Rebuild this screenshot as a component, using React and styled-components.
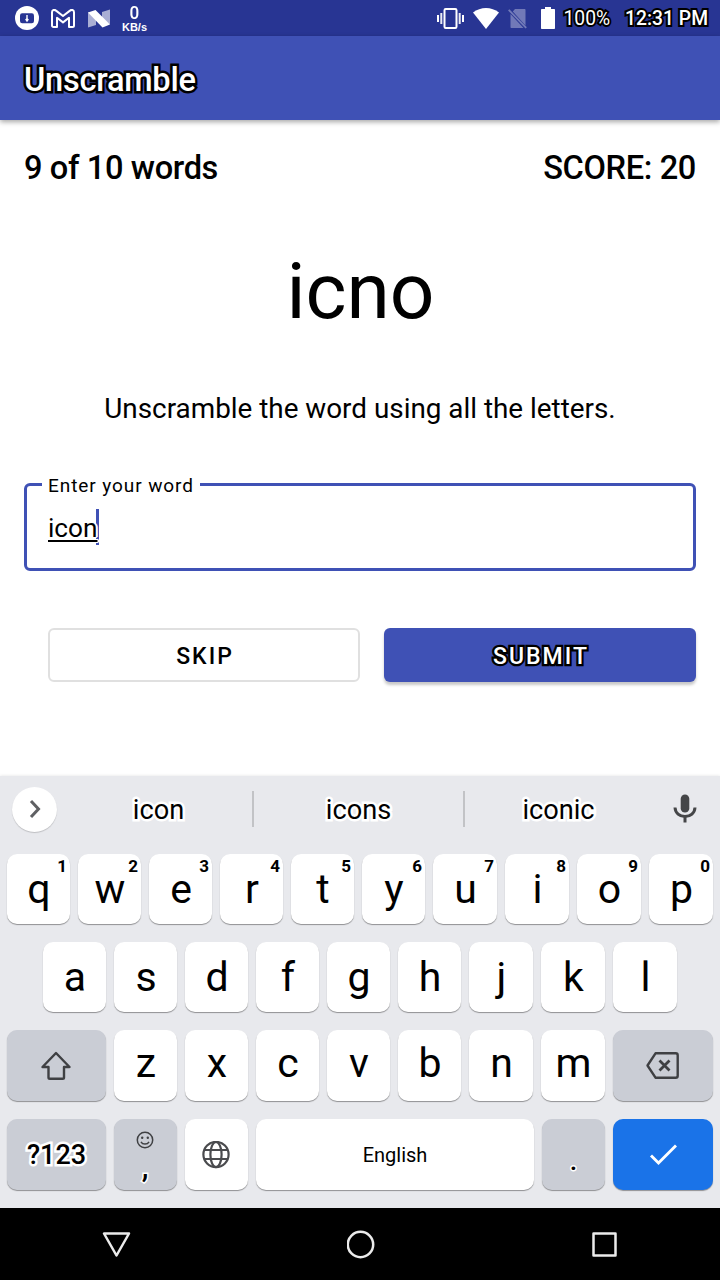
import React from "react";
import styled, { createGlobalStyle, css } from "styled-components";

const Global = createGlobalStyle`
  * { box-sizing: border-box; }
  body { margin: 0; background: #fff; font-family: Roboto, sans-serif; color: #000; }
  button { font-family: inherit; color: inherit; border: 0; padding: 0; background: none; }
  svg { display: block; flex: none; }
`;

const outlined = (color, width) => css`
  -webkit-text-stroke: ${width}px ${color};
  paint-order: stroke fill;
  stroke-linejoin: round;
`;

const Screen = styled.div`
  width: 720px;
  height: 1280px;
  display: flex;
  flex-direction: column;
  overflow: hidden;
  background: #fff;
`;

const StatusBar = styled.header`
  height: 36px;
  flex: none;
  display: flex;
  align-items: center;
  justify-content: space-between;
  padding: 0 12px 0 15px;
  background: #283593;
  color: #fff;
`;

const StatusGroup = styled.div`
  display: flex;
  align-items: center;
  gap: ${(p) => p.$gap}px;
  margin-left: ${(p) => p.$left || 0}px;
`;

const NetSpeed = styled.div`
  display: flex;
  flex-direction: column;
  align-items: center;
  width: 27px;
  margin-left: -1px;
  font-family: "Liberation Sans", sans-serif;
  font-weight: 700;
`;

const NetValue = styled.span`
  font-family: Roboto, sans-serif;
  font-size: 19px;
  line-height: 18px;
  font-weight: 500;
  transform: scaleX(0.9);
`;

const NetUnit = styled.span`
  font-size: 11px;
  line-height: 10px;
`;

const StatusText = styled.span`
  font-size: 19.3px;
  line-height: 36px;
  padding-top: 1px;
  font-weight: ${(p) => p.$weight};
  margin-left: ${(p) => p.$left}px;
  white-space: nowrap;
  ${outlined("#000", 4)}
`;

const AppBar = styled.div`
  height: 84px;
  flex: none;
  display: flex;
  align-items: center;
  padding: 4px 24px 0;
  background: #3f51b5;
  box-shadow: 0 2px 5px rgba(0, 0, 0, 0.35);
`;

const Title = styled.h1`
  margin: 0;
  color: #fff;
  font-size: 32.6px;
  letter-spacing: -0.25px;
  font-weight: 500;
  ${outlined("#000", 5)}
`;

const Game = styled.main`
  flex: 1;
  min-height: 0;
  display: flex;
  flex-direction: column;
  padding: 25px 24px 0;
`;

const Stats = styled.div`
  display: flex;
  justify-content: space-between;
  font-size: 32.6px;
  letter-spacing: -0.37px;
  line-height: 46px;
  font-weight: 500;
`;

const Scrambled = styled.div`
  margin-top: 52px;
  padding-left: 1px;
  text-align: center;
  font-size: 78.4px;
  line-height: 96px;
`;

const Instructions = styled.p`
  margin: 50px 0 0;
  text-align: center;
  font-size: 27.85px;
  line-height: 40px;
`;

const Field = styled.fieldset`
  margin: 43px 0 0;
  padding: 0 21px;
  height: 99px;
  min-width: 0;
  border: 3px solid #3f51b5;
  border-radius: 6px;
`;

const Label = styled.legend`
  margin-left: -6px;
  padding: 3px 6px 0;
  font-size: 19px;
  line-height: 22px;
  letter-spacing: 0.92px;
`;

const Entry = styled.div`
  display: flex;
  align-items: center;
  height: 36px;
  margin-top: 12px;
  font-size: 26.2px;
`;

const Typed = styled.span`
  position: relative;
  z-index: 1;
  padding-top: 2px;
  text-decoration: underline;
  text-decoration-thickness: 2px;
  text-underline-offset: 3px;
  text-decoration-skip-ink: none;
  text-shadow: 1px 0 #fff, 2px 0 #fff, 1px 1px #fff, 1px -1px #fff;
`;

const Caret = styled.span`
  width: 3px;
  height: 36px;
  margin-left: -1px;
  background: #3f51b5;
`;

const Actions = styled.div`
  display: grid;
  grid-template-columns: 1fr 1fr;
  gap: 24px;
  margin-top: 57px;
  padding-left: 24px;
`;

const Action = styled.button`
  height: 54px;
  padding: 2px 0 0 2px;
  border-radius: 6px;
  font-size: 23px;
  font-weight: 500;
  letter-spacing: 2px;
  ${(p) =>
    p.$primary
      ? css`
          background: #3f51b5;
          color: #fff;
          box-shadow: 0 3px 3px rgba(0, 0, 0, 0.22);
          ${outlined("#000", 4.5)}
        `
      : css`
          border: 2px solid #e0e0e0;
        `}
`;

const Keyboard = styled.section`
  height: 432px;
  flex: none;
  background: #e8e9ed;
  box-shadow: 0 0 3px rgba(0, 0, 0, 0.12);
`;

const Suggestions = styled.div`
  height: 78px;
  display: flex;
  align-items: center;
  padding: 0 23px 12px 12px;
`;

const Expand = styled.button`
  width: 45px;
  height: 45px;
  padding-left: 1px;
  border-radius: 50%;
  display: grid;
  place-items: center;
  background: #fff;
  box-shadow: 0 1px 1px rgba(0, 0, 0, 0.18);
`;

const Suggestion = styled.span`
  width: ${(p) => p.$width}px;
  margin-left: ${(p) => p.$left || 0}px;
  text-align: center;
  font-size: 27.2px;
  padding-top: 2px;
  ${outlined("#fff", 5)}
`;

const Divider = styled.span`
  width: 2px;
  height: 36px;
  background: #c2c3c6;
`;

const MicSlot = styled.span`
  margin-left: auto;
`;

const Rows = styled.div`
  display: flex;
  flex-direction: column;
  gap: 18px;
  padding: 0 7px;
`;

const Row = styled.div`
  display: flex;
  gap: 8px;
  height: ${(p) => p.$height}px;
  padding: 0 ${(p) => (p.$inset ? 36 : 0)}px;
`;

const keyTones = { light: "#fff", dim: "#cacdd5", blue: "#1a73e8" };

const Key = styled.button`
  position: relative;
  flex: ${(p) => (p.$grow ? "1 1 0" : "none")};
  width: ${(p) => p.$w || 63}px;
  height: 100%;
  display: flex;
  align-items: center;
  justify-content: center;
  border-radius: 10px;
  background: ${(p) => keyTones[p.$tone || "light"]};
  box-shadow: 0 1px 1px rgba(0, 0, 0, 0.38);

  > svg {
    margin-right: 1px;
  }
`;

const Letter = styled.span`
  font-size: 41px;
  line-height: 64px;
  padding: 0 0 ${(p) => p.$lift}px 1px;
`;

const Hint = styled.span`
  position: absolute;
  top: 2px;
  right: 3px;
  font-size: 17px;
  line-height: 20px;
  font-weight: 700;
`;

const KeyLabel = styled.span`
  font-size: ${(p) => p.$size}px;
  font-weight: ${(p) => p.$weight || 400};
  padding-top: 1px;
  ${(p) => p.$halo && outlined("#fff", 5)}
`;

const EmojiComma = styled.span`
  display: flex;
  flex-direction: column;
  align-items: center;
  gap: 4px;
  padding: 3px 1px 0 0;
`;

const Punct = styled.span`
  font-size: ${(p) => p.$size}px;
  line-height: 28px;
  font-weight: 500;
  padding-top: ${(p) => p.$drop || 0}px;
  ${outlined("#fff", 3)}
`;

const NavBar = styled.nav`
  height: 72px;
  flex: none;
  display: flex;
  align-items: center;
  justify-content: space-between;
  padding: 0 102px;
  background: #000;
`;

const Circle = () => (
  <svg width="24" height="24" viewBox="0 0 24 24">
    <circle cx="12" cy="12" r="12" fill="#fff" />
    <rect x="5" y="7.2" width="14" height="10" rx="2.2" fill="#283593" />
    <path d="M12 9v6M10.7 13l1.3 2 1.3-2" stroke="#fff" strokeWidth="1.4" fill="none" />
  </svg>
);

const Mail = () => (
  <svg width="24" height="19" viewBox="0 0 24 19" fill="none" stroke="#fff" strokeWidth="2" strokeLinejoin="round">
    <path d="M1 3.2C1 .8 3.4.3 5 1.6l7 5.4 7-5.4c1.600-1.300 4-.8 4 1.600V16.500c0 .9-.6 1.500-1.500 1.500H18V8.800l-6 4.600-6-4.600V18H2.500C1.600 18 1 17.400 1 16.500z" />
  </svg>
);

const Nougat = () => (
  <svg width="23" height="19" viewBox="-1 0 23 19" fill="#fff">
    <path d="M0 3v15.500l8-2.500V9z" opacity=".6" />
    <path d="M22 .5v15l-8-6V3z" opacity=".6" />
    <path d="M0 3.500L7.500 1 22 15.500 14.500 18.500z" />
  </svg>
);

const Vibrate = () => (
  <svg width="27" height="21" viewBox="0 0 27 21" fill="none" stroke="#fff">
    <rect x="7.500" y="1" width="12" height="19" rx="1.200" strokeWidth="2" />
    <path d="M1 7v7M26 7v7" strokeWidth="2" />
    <path d="M4.300 5v11M22.700 5v11" strokeWidth="2" opacity=".9" />
  </svg>
);

const Wifi = () => (
  <svg width="26" height="21" viewBox="0 0 26 21" fill="#fff">
    <path d="M0 4.500C7.500-1.500 18.500-1.500 26 4.500L13 21z" />
  </svg>
);

const NoSim = () => (
  <svg width="19" height="21" viewBox="0 0 19 21">
    <path d="M7 1h9.500c.6 0 1 .4 1 1v15.500L4.800 3.500zM2.500 6l13 14H3.500c-.6 0-1-.4-1-1z" fill="#fff" opacity=".34" />
    <path d="M.7 1.800l17.500 18" stroke="#fff" strokeWidth="1.800" opacity=".34" />
  </svg>
);

const Battery = () => (
  <svg width="14" height="22" viewBox="0 0 14 22" fill="#fff">
    <path d="M4 0h6v2h3c.6 0 1 .4 1 1v18c0 .6-.4 1-1 1H1c-.6 0-1-.4-1-1V3c0-.6.4-1 1-1h3z" />
  </svg>
);

const Chevron = () => (
  <svg width="14" height="20" viewBox="0 0 14 20" fill="none" stroke="#5f6063" strokeWidth="3">
    <path d="M3 2l7.500 8L3 18" />
  </svg>
);

const Mic = () => (
  <svg width="24" height="30" viewBox="0 0 24 30" fill="none">
    <rect x="7.700" y="0.500" width="8.600" height="18" rx="4.300" fill="#454648" />
    <path d="M2 13.500c.3 5.500 4.500 9 10 9s9.700-3.500 10-9M12 22.500v6" stroke="#454648" strokeWidth="3" />
  </svg>
);

const Shift = () => (
  <svg width="30" height="29" viewBox="0 0 30 29" fill="none" stroke="#3f4043" strokeWidth="2.400" strokeLinejoin="round">
    <path d="M15 2l13.500 14H23v10.500c0 .8-.5 1.300-1.300 1.300H8.800c-.8 0-1.300-.5-1.300-1.300V16h-6z" />
  </svg>
);

const Backspace = () => (
  <svg width="33" height="27" viewBox="0 0 33 27" fill="none" stroke="#3f4043" strokeWidth="2.400" strokeLinejoin="round">
    <path d="M9.500 1.300h20.200c1.200 0 2 .8 2 2v20.400c0 1.200-.8 2-2 2H9.500L1.500 13.500z" />
    <path d="M13.500 8.500l10 10M23.500 8.500l-10 10" strokeWidth="2.800" />
  </svg>
);

const Smile = () => (
  <svg width="18" height="18" viewBox="0 0 18 18" fill="none" stroke="#3f4043" strokeWidth="1.500">
    <circle cx="9" cy="9" r="7.700" />
    <path d="M5 10.800c1.500 3 6.500 3 8 0" />
    <circle cx="6.200" cy="6.800" r="1.200" fill="#3f4043" stroke="none" />
    <circle cx="11.800" cy="6.800" r="1.200" fill="#3f4043" stroke="none" />
  </svg>
);

const Globe = () => (
  <svg width="28" height="28" viewBox="0 0 28 28" fill="none" stroke="#4a4b4e" strokeWidth="2.200">
    <circle cx="14" cy="13.500" r="12.600" />
    <ellipse cx="14" cy="13.500" rx="5.600" ry="12.600" />
    <path d="M2.500 9h23M2.500 18h23" />
  </svg>
);

const Check = () => (
  <svg width="28" height="22" viewBox="0 0 28 22" fill="none" stroke="#fff" strokeWidth="2.900">
    <path d="M2 11.500l7.500 7.500L27 1.500" />
  </svg>
);

const NavIcon = ({ width, children }) => (
  <svg width={width} height="30" viewBox={`0 0 ${width} 30`} fill="none" stroke="#ebebeb" strokeWidth="2.500" strokeLinejoin="round">
    {children}
  </svg>
);

const LetterKey = ({ letter, hint, width, lift = 1 }) => (
  <Key $w={width}>
    <Letter $lift={lift}>{letter}</Letter>
    {hint && <Hint>{hint}</Hint>}
  </Key>
);

const topRow = ["q1", "w2", "e3", "r4", "t5", "y6", "u7", "i8", "o9", "p0"];

export default function App() {
  return (
    <Screen>
      <Global />
      <StatusBar>
        <StatusGroup $gap={12}>
          <Circle />
          <Mail />
          <Nougat />
          <NetSpeed>
            <NetValue>0</NetValue>
            <NetUnit>KB/s</NetUnit>
          </NetSpeed>
        </StatusGroup>
        <StatusGroup $gap={9}>
          <Vibrate />
          <Wifi />
          <NoSim />
          <StatusGroup $gap={0} $left={5}>
            <Battery />
            <StatusText $weight={400} $left={8}>100%</StatusText>
            <StatusText $weight={500} $left={15}>12:31 PM</StatusText>
          </StatusGroup>
        </StatusGroup>
      </StatusBar>
      <AppBar>
        <Title>Unscramble</Title>
      </AppBar>
      <Game>
        <Stats>
          <span>9 of 10 words</span>
          <span>SCORE: 20</span>
        </Stats>
        <Scrambled>icno</Scrambled>
        <Instructions>Unscramble the word using all the letters.</Instructions>
        <Field>
          <Label>Enter your word</Label>
          <Entry>
            <Typed>icon</Typed>
            <Caret />
          </Entry>
        </Field>
        <Actions>
          <Action>SKIP</Action>
          <Action $primary>SUBMIT</Action>
        </Actions>
      </Game>
      <Keyboard>
        <Suggestions>
          <Expand aria-label="Expand">
            <Chevron />
          </Expand>
          <Suggestion $width={187} $left={8}>icon</Suggestion>
          <Divider />
          <Suggestion $width={209}>icons</Suggestion>
          <Divider />
          <Suggestion $width={187}>iconic</Suggestion>
          <MicSlot>
            <Mic />
          </MicSlot>
        </Suggestions>
        <Rows>
          <Row $height={70}>
            {topRow.map(([letter, hint], i) => (
              <LetterKey key={letter} letter={letter} hint={hint} width={i < 6 ? 63 : 64} />
            ))}
          </Row>
          <Row $height={70} $inset>
            {[..."asdfghjkl"].map((letter, i) => (
              <LetterKey key={letter} letter={letter} width={i < 6 ? 63 : 64} />
            ))}
          </Row>
          <Row $height={71}>
            <Key $w={99} $tone="dim" aria-label="Shift">
              <Shift />
            </Key>
            {[..."zxcvbnm"].map((letter, i) => (
              <LetterKey key={letter} letter={letter} width={i < 5 ? 63 : 64} lift={5} />
            ))}
            <Key $w={100} $tone="dim" aria-label="Backspace">
              <Backspace />
            </Key>
          </Row>
          <Row $height={71}>
            <Key $w={99} $tone="dim">
              <KeyLabel $size={27} $weight={500} $halo>?123</KeyLabel>
            </Key>
            <Key $tone="dim">
              <EmojiComma>
                <Smile />
                <Punct $size={30}>,</Punct>
              </EmojiComma>
            </Key>
            <Key aria-label="Language">
              <Globe />
            </Key>
            <Key $grow>
              <KeyLabel $size={20}>English</KeyLabel>
            </Key>
            <Key $tone="dim">
              <Punct $size={27} $drop={12}>.</Punct>
            </Key>
            <Key $w={100} $tone="blue" aria-label="Done">
              <Check />
            </Key>
          </Row>
        </Rows>
      </Keyboard>
      <NavBar>
        <NavIcon width={29}>
          <path d="M2 4.500h25L14.500 26.500z" />
        </NavIcon>
        <NavIcon width={29}>
          <circle cx="13.500" cy="15.500" r="12.700" />
        </NavIcon>
        <NavIcon width={27}>
          <rect x="2.500" y="4.500" width="22" height="22" />
        </NavIcon>
      </NavBar>
    </Screen>
  );
}
